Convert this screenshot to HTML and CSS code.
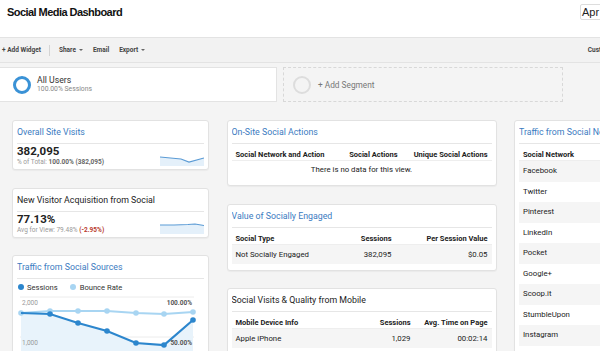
FILE: index.html
```html
<!DOCTYPE html>
<html lang="en">
<head>
    <meta charset="UTF-8">
    <title>Social Media Dashboard</title>
    <link rel="stylesheet" href="styles.css">
</head>
<body>
<div class="page">
    <header class="top">
        <h1>Social Media Dashboard</h1>
        <div class="date-range">Apr 1, 2017 - Apr 30, 2017</div>
    </header>

    <div class="toolbar">
        <span class="tool">+ Add Widget</span>
        <span class="sep"></span>
        <span class="tool">Share<i class="caret"></i></span>
        <span class="tool">Email</span>
        <span class="tool">Export<i class="caret"></i></span>
        <span class="tool tool-right">Customize Dashboard</span>
    </div>

    <div class="segments">
        <div class="segment">
            <span class="ring"></span>
            <div>
                <div class="seg-name">All Users</div>
                <div class="seg-sub">100.00% Sessions</div>
            </div>
        </div>
        <div class="segment add">
            <span class="ring grey"></span>
            <span class="seg-add">+ Add Segment</span>
        </div>
    </div>

    <div class="dashboard">
        <!-- left column -->
        <div class="column">
            <div class="card">
                <div class="card-title">Overall Site Visits</div>
                <div class="metric">
                    <div>
                        <div class="metric-value">382,095</div>
                        <div class="metric-sub">% of Total: <b>100.00% (382,095)</b></div>
                    </div>
                    <svg class="spark" width="44" height="11" viewBox="0 0 44 11">
                        <polygon points="0,2 21,4 29,7 44,3 44,11 0,11" fill="#e4f0fa"/>
                        <polyline points="0,2 21,4 29,7 44,3" fill="none" stroke="#5b9bd5" stroke-width="1.2"/>
                    </svg>
                </div>
            </div>

            <div class="card">
                <div class="card-title dark">New Visitor Acquisition from Social</div>
                <div class="metric">
                    <div>
                        <div class="metric-value">77.13%</div>
                        <div class="metric-sub">Avg for View: 79.48% <span class="neg">(-2.95%)</span></div>
                    </div>
                    <svg class="spark" width="44" height="11" viewBox="0 0 44 11">
                        <polygon points="0,2 14,2 28,1.5 35,1 44,2.5 44,11 0,11" fill="#e4f0fa"/>
                        <polyline points="0,2 14,2 28,1.5 35,1 44,2.5" fill="none" stroke="#5b9bd5" stroke-width="1.2"/>
                    </svg>
                </div>
            </div>

            <div class="card">
                <div class="card-title">Traffic from Social Sources</div>
                <div class="legend">
                    <span class="dot"></span>Sessions
                    <span class="dot light"></span>Bounce Rate
                </div>
                <svg class="chart" width="188" height="70" viewBox="0 0 188 70">
                    <line x1="3" y1="2" x2="177" y2="2" stroke="#ececec"/>
                    <line x1="3" y1="42" x2="177" y2="42" stroke="#ececec"/>
                    <polygon points="4,18 33,19 61,28 90,36 119,48 147,50 176,25 176,70 4,70" fill="#e8f3fb"/>
                    <polyline points="4,18 33,16 61,16 90,16 119,18 147,19 176,17" fill="none" stroke="#a8d5f2" stroke-width="2.2"/>
                    <g fill="#a8d5f2">
                        <circle cx="4" cy="18" r="2.8"/><circle cx="33" cy="16" r="2.8"/><circle cx="61" cy="16" r="2.8"/>
                        <circle cx="90" cy="16" r="2.8"/><circle cx="119" cy="18" r="2.8"/><circle cx="147" cy="19" r="2.8"/>
                        <circle cx="176" cy="17" r="2.8"/>
                    </g>
                    <polyline points="4,18 33,19 61,28 90,36 119,48 147,50 176,25" fill="none" stroke="#2c86cd" stroke-width="2.2"/>
                    <g fill="#2c86cd">
                        <circle cx="33" cy="19" r="2.8"/><circle cx="61" cy="28" r="2.8"/><circle cx="90" cy="36" r="2.8"/>
                        <circle cx="119" cy="48" r="2.8"/><circle cx="147" cy="50" r="2.8"/><circle cx="176" cy="25" r="2.8"/>
                    </g>
                    <text x="5" y="9.5" class="axis">2,000</text>
                    <text x="175" y="9.5" class="axis pct" text-anchor="end">100.00%</text>
                    <text x="5" y="49.5" class="axis">1,000</text>
                    <text x="175" y="49.5" class="axis pct" text-anchor="end">50.00%</text>
                </svg>
            </div>
        </div>

        <!-- middle column -->
        <div class="column">
            <div class="card">
                <div class="card-title">On-Site Social Actions</div>
                <table class="table">
                    <tr>
                        <th>Social Network and Action</th>
                        <th class="num w-actions-2">Social Actions</th>
                        <th class="num w-actions-3">Unique Social Actions</th>
                    </tr>
                    <tr><td colspan="3" class="empty">There is no data for this view.</td></tr>
                </table>
            </div>

            <div class="card">
                <div class="card-title">Value of Socially Engaged</div>
                <table class="table">
                    <tr>
                        <th>Social Type</th>
                        <th class="num w-sessions">Sessions</th>
                        <th class="num w-value">Per Session Value</th>
                    </tr>
                    <tr class="shade">
                        <td>Not Socially Engaged</td>
                        <td class="num">382,095</td>
                        <td class="num">$0.05</td>
                    </tr>
                </table>
            </div>

            <div class="card">
                <div class="card-title dark">Social Visits &amp; Quality from Mobile</div>
                <table class="table">
                    <tr>
                        <th>Mobile Device Info</th>
                        <th class="num w-mob-sessions">Sessions</th>
                        <th class="num w-time">Avg. Time on Page</th>
                    </tr>
                    <tr class="shade">
                        <td>Apple iPhone</td>
                        <td class="num">1,029</td>
                        <td class="num">00:02:14</td>
                    </tr>
                </table>
            </div>
        </div>

        <!-- right column -->
        <div class="column">
            <div class="card">
                <div class="card-title">Traffic from Social Networks</div>
                <table class="table networks">
                    <tr><th>Social Network</th></tr>
                    <tr class="shade"><td>Facebook</td></tr>
                    <tr><td>Twitter</td></tr>
                    <tr class="shade"><td>Pinterest</td></tr>
                    <tr><td>LinkedIn</td></tr>
                    <tr class="shade"><td>Pocket</td></tr>
                    <tr><td>Google+</td></tr>
                    <tr class="shade"><td>Scoop.it</td></tr>
                    <tr><td>StumbleUpon</td></tr>
                    <tr class="shade"><td>Instagram</td></tr>
                    <tr><td>Reddit</td></tr>
                </table>
            </div>
        </div>
    </div>
</div>
</body>
</html>
```

FILE: styles.css
```css
html, body {
    margin: 0;
    padding: 0;
    overflow: hidden;
}
body {
    font-family: Roboto, "Liberation Sans", Arial, sans-serif;
    color: #222;
    background: #f4f4f4;
}
.page {
    width: 740px;
}

/* header */
.top {
    display: flex;
    align-items: center;
    height: 37px;
    box-sizing: border-box;
    padding: 0 10px 14px 7px;
    background: #fff;
}
.top h1 {
    flex: 1;
    margin: 0;
    font: bold 11px "Liberation Sans", Arial, sans-serif;
    letter-spacing: -0.55px;
    color: #111;
}
.date-range {
    width: 150px;
    height: 16px;
    box-sizing: border-box;
    border: 1px solid #ddd;
    border-radius: 2px;
    padding: 0 1px;
    font: 11px/14px "Liberation Sans", Arial, sans-serif;
    white-space: nowrap;
    overflow: hidden;
}

/* toolbar */
.toolbar {
    display: flex;
    align-items: center;
    height: 26px;
    box-sizing: border-box;
    padding: 0 88px 0 2px;
    border-top: 1px solid #e3e3e3;
    border-bottom: 1px solid #e3e3e3;
    background: #f2f2f2;
    font-size: 6.5px;
    font-weight: bold;
    color: #444;
    white-space: nowrap;
}
.tool {
    margin-right: 10px;
}
.sep {
    width: 1px;
    height: 11px;
    margin: 0 9px 0 -2px;
    background: #d4d4d4;
}
.caret {
    display: inline-block;
    margin-left: 3px;
    vertical-align: middle;
    border-left: 2px solid transparent;
    border-right: 2px solid transparent;
    border-top: 2px solid #666;
}
.tool-right {
    margin-left: auto;
    margin-right: 0;
}

/* segments */
.segments {
    display: flex;
    padding-top: 4px;
}
.segment {
    display: flex;
    align-items: center;
    width: 277px;
    height: 35px;
    box-sizing: border-box;
    padding-left: 13px;
    background: #fff;
    border: 1px solid #e3e3e3;
    border-left: 0;
}
.segment.add {
    width: 280px;
    margin-left: 6px;
    padding-left: 9px;
    background: transparent;
    border: 1px dashed #d8d8d8;
}
.ring {
    width: 18px;
    height: 18px;
    box-sizing: border-box;
    margin-right: 6px;
    border: 3px solid #3a92d6;
    border-radius: 50%;
}
.ring.grey {
    margin-right: 7px;
    border: 2px solid #ddd;
}
.seg-name {
    font-size: 8.7px;
    line-height: 10px;
    color: #333;
}
.seg-sub {
    font-size: 6.8px;
    line-height: 9px;
    color: #888;
}
.seg-add {
    font-size: 8.3px;
    color: #777;
}

/* dashboard */
.dashboard {
    display: grid;
    grid-template-columns: 197px 270px 200px;
    column-gap: 17.5px;
    align-items: start;
    padding: 18px 0 0 12px;
}
.column {
    display: flex;
    flex-direction: column;
    gap: 17.5px;
}
.card {
    background: #fff;
    border: 1px solid #e2e2e2;
    border-radius: 3px;
    padding: 0 4px;
    box-shadow: 0 1px 1px rgba(0, 0, 0, 0.04);
}
.card-title {
    height: 21px;
    padding-top: 1px;
    line-height: 21px;
    border-bottom: 1px solid #e6e6e6;
    font-size: 8.8px;
    color: #3b7bbf;
    white-space: nowrap;
    overflow: hidden;
}
.card-title.dark {
    color: #222;
}

/* metric cards */
.metric {
    display: flex;
    justify-content: space-between;
    align-items: flex-end;
    padding-bottom: 2px;
}
.metric-value {
    font-size: 11.5px;
    font-weight: bold;
    line-height: 14px;
}
.metric-sub {
    font-size: 6.5px;
    line-height: 9px;
    color: #999;
}
.metric-sub b {
    color: #666;
}
.metric-sub .neg {
    color: #b83a2e;
    font-weight: bold;
}
.spark {
    display: block;
    margin-bottom: 1px;
}

/* chart card */
.legend {
    display: flex;
    align-items: center;
    height: 16px;
    font-size: 7.6px;
    color: #333;
}
.dot {
    width: 6px;
    height: 6px;
    margin: 0 3px 0 1px;
    border-radius: 50%;
    background: #2c86cd;
}
.dot.light {
    margin: 0 4px 0 12px;
    background: #a8d5f2;
}
.chart {
    display: block;
}
.axis {
    font-size: 6.5px;
    fill: #999;
}
.axis.pct {
    font-weight: bold;
    fill: #555;
}

/* tables */
.table {
    width: 100%;
    border-collapse: separate;
    border-spacing: 0;
    font-size: 7.8px;
    margin-bottom: 6px;
}
.table th {
    padding: 6px 4px 1px;
    line-height: 9px;
    text-align: left;
    font-size: 7.5px;
    border-bottom: 1px solid #eee;
    white-space: nowrap;
}
.table td {
    padding: 0 4px;
    line-height: 19px;
    white-space: nowrap;
}
.table .num {
    text-align: right;
}
.table .shade td {
    background: #f5f5f5;
}
.table .empty {
    line-height: 18px;
    text-align: center;
}
.w-actions-2 { width: 54px; }
.w-actions-3 { width: 82px; }
.w-sessions { width: 72px; }
.w-value { width: 88px; }
.w-mob-sessions { width: 72px; }
.w-time { width: 69px; }
.networks td {
    line-height: 20.5px;
}
```
